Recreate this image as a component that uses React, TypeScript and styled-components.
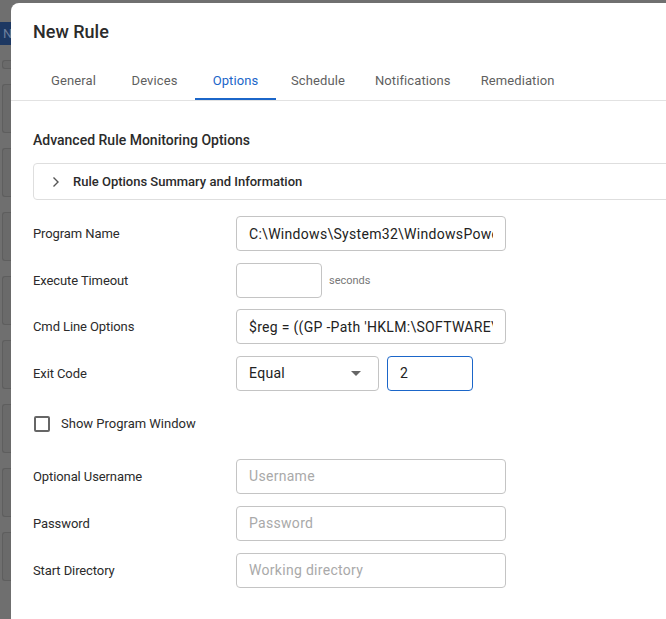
import React from "react";
import styled, { createGlobalStyle } from "styled-components";

const GlobalStyle = createGlobalStyle`
  html, body {
    margin: 0;
    padding: 0;
    height: 100%;
    overflow: hidden;
    background: #707070;
  }
  body {
    font-family: Roboto, "Liberation Sans", Arial, sans-serif;
    -webkit-font-smoothing: antialiased;
  }
  * { box-sizing: border-box; }
`;

const Screen = styled.div`
  display: flex;
  width: 666px;
  height: 619px;
  overflow: hidden;
`;

/* the dimmed app behind the dialog */
const Behind = styled.div`
  width: 11px;
  flex-shrink: 0;
  display: flex;
  flex-direction: column;
  background: #6f6f6f;
  padding-top: 22px;
`;

const BehindButton = styled.div`
  height: 23px;
  background: #1d3862;
  color: #6d7f9c;
  font-size: 13px;
  line-height: 23px;
  padding-left: 3px;
  overflow: hidden;
`;

const BehindCard = styled.div<{ $h?: number }>`
  height: ${(p) => p.$h ?? 49}px;
  margin: 15px 0 0 2px;
  background: #6a6a6a;
  border: 1px solid #5e5e5e;
  border-right: none;
  border-radius: 3px 0 0 3px;
`;

const Dialog = styled.div`
  flex: 1;
  min-width: 0;
  margin-top: 3px;
  background: #fff;
  border-top-left-radius: 8px;
  display: flex;
  flex-direction: column;
  overflow: hidden;
`;

const Title = styled.h2`
  margin: 0;
  padding: 17px 22px 0;
  font-size: 18px;
  line-height: 24px;
  font-weight: 500;
  color: #2b2b2b;
`;

const TabBar = styled.div`
  display: flex;
  margin-top: 16px;
  padding-left: 22px;
  border-bottom: 1px solid #e2e2e2;
`;

const Tab = styled.div<{ $active?: boolean }>`
  min-width: 81px;
  height: 40px;
  padding: 2px 15px 0;
  display: flex;
  align-items: center;
  justify-content: center;
  font-size: 13px;
  letter-spacing: 0.1px;
  color: ${(p) => (p.$active ? "#1b66c9" : "#5f5f5f")};
  border-bottom: 2px solid ${(p) => (p.$active ? "#1b66c9" : "transparent")};
  white-space: nowrap;
`;

const Body = styled.div`
  padding: 29px 0 0 22px;
  display: flex;
  flex-direction: column;
`;

const SectionTitle = styled.h3`
  margin: 0;
  font-size: 14px;
  line-height: 20px;
  font-weight: 500;
  color: #2b2b2b;
`;

const Accordion = styled.div`
  margin-top: 13px;
  width: 700px;
  height: 37px;
  border: 1px solid #dedede;
  border-radius: 4px;
  display: flex;
  align-items: center;
  padding-left: 17px;
  gap: 12px;
  font-size: 13px;
  font-weight: 500;
  color: #2b2b2b;
`;

const Form = styled.div`
  margin-top: 16px;
  display: flex;
  flex-direction: column;
`;

const Row = styled.div<{ $gap?: number }>`
  display: flex;
  align-items: center;
  margin-top: ${(p) => p.$gap ?? 11.67}px;
  &:first-child { margin-top: 0; }
`;

const Label = styled.label`
  width: 203px;
  flex-shrink: 0;
  font-size: 13px;
  letter-spacing: -0.1px;
  color: #2b2b2b;
`;

const Field = styled.input<{ $w?: number; $focused?: boolean }>`
  width: ${(p) => p.$w ?? 270}px;
  height: 35px;
  padding: 0 12px;
  border: 1px solid ${(p) => (p.$focused ? "#1b66c9" : "#c4c4c4")};
  border-radius: 4px;
  font-family: inherit;
  font-size: 14px;
  letter-spacing: 0.3px;
  color: #222;
  background: #fff;
  outline: none;
  &::placeholder { color: #a9a9a9; }
`;

const Unit = styled.span`
  margin-left: 7px;
  font-size: 11px;
  color: #777;
`;

const Select = styled.div`
  width: 143px;
  height: 35px;
  padding: 0 10px 0 12px;
  border: 1px solid #c4c4c4;
  border-radius: 4px;
  display: flex;
  align-items: center;
  justify-content: space-between;
  font-size: 14px;
  letter-spacing: 0.3px;
  color: #222;
  margin-right: 8px;
`;

const CheckRow = styled.div`
  display: flex;
  align-items: center;
  height: 24px;
  margin: 21px 0 23px;
  padding-left: 1px;
  gap: 11px;
  font-size: 13px;
  color: #2b2b2b;
`;

const Checkbox = styled.span`
  width: 16px;
  height: 16px;
  border: 2px solid #666;
  border-radius: 2px;
`;

const Chevron = () => (
  <svg width="10" height="12" viewBox="0 0 10 12">
    <polyline points="2.5,1.5 7,6 2.5,10.5" fill="none" stroke="#555" strokeWidth="1.4" />
  </svg>
);

const Caret = () => (
  <svg width="24" height="24" viewBox="0 0 24 24">
    <path d="M7 10l5 5 5-5z" fill="#666" />
  </svg>
);

const tabs = ["General", "Devices", "Options", "Schedule", "Notifications", "Remediation"];

export default function App() {
  return (
    <>
      <GlobalStyle />
      <Screen>
        <Behind>
          <BehindButton>N</BehindButton>
          <BehindCard $h={9} />
          <BehindCard $h={49} />
          <BehindCard />
          <BehindCard />
          <BehindCard />
          <BehindCard />
          <BehindCard />
          <BehindCard />
          <BehindCard />
        </Behind>
        <Dialog>
          <Title>New Rule</Title>
          <TabBar>
            {tabs.map((t) => (
              <Tab key={t} $active={t === "Options"}>
                {t}
              </Tab>
            ))}
          </TabBar>
          <Body>
            <SectionTitle>Advanced Rule Monitoring Options</SectionTitle>
            <Accordion>
              <Chevron />
              Rule Options Summary and Information
            </Accordion>
            <Form>
              <Row>
                <Label>Program Name</Label>
                <Field readOnly value="C:\Windows\System32\WindowsPowerShell\v1.0\powershell.exe" />
              </Row>
              <Row>
                <Label>Execute Timeout</Label>
                <Field readOnly $w={86} value="" />
                <Unit>seconds</Unit>
              </Row>
              <Row>
                <Label>Cmd Line Options</Label>
                <Field
                  readOnly
                  value="$reg = ((GP -Path 'HKLM:\SOFTWARE\Microsoft\Windows NT\CurrentVersion').ReleaseId)"
                />
              </Row>
              <Row>
                <Label>Exit Code</Label>
                <Select>
                  Equal
                  <Caret />
                </Select>
                <Field readOnly $w={86} $focused value="2" />
              </Row>
              <CheckRow>
                <Checkbox />
                Show Program Window
              </CheckRow>
              <Row $gap={0}>
                <Label>Optional Username</Label>
                <Field readOnly placeholder="Username" />
              </Row>
              <Row $gap={12}>
                <Label>Password</Label>
                <Field readOnly placeholder="Password" />
              </Row>
              <Row $gap={12}>
                <Label>Start Directory</Label>
                <Field readOnly placeholder="Working directory" />
              </Row>
            </Form>
          </Body>
        </Dialog>
      </Screen>
    </>
  );
}
